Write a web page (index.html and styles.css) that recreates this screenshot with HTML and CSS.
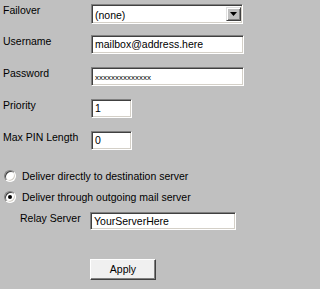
FILE: index.html
```html
<!DOCTYPE html>
<html>
<head>
<meta charset="utf-8">
<link rel="stylesheet" href="styles.css">
</head>
<body>
<div class="panel">
  <div class="row first">
    <span class="lbl">Failover</span>
    <div class="select">
      <span class="val">(none)</span>
      <span class="drop"><svg width="7" height="4" viewBox="0 0 7 4"><path d="M0 0H7L3.5 4Z" fill="#000"/></svg></span>
    </div>
  </div>
  <div class="row">
    <span class="lbl">Username</span>
    <div class="field wide">mailbox@address.here</div>
  </div>
  <div class="row">
    <span class="lbl">Password</span>
    <div class="field wide pw">xxxxxxxxxxxxxx</div>
  </div>
  <div class="row">
    <span class="lbl">Priority</span>
    <div class="field short">1</div>
  </div>
  <div class="row">
    <span class="lbl">Max PIN Length</span>
    <div class="field short">0</div>
  </div>
  <div class="radios">
    <div class="opt"><span class="radio"></span><span>Deliver directly to destination server</span></div>
    <div class="opt"><span class="radio on"></span><span>Deliver through outgoing mail server</span></div>
  </div>
  <div class="relay">
    <span class="lbl relay-lbl">Relay Server</span>
    <div class="field relay-field">YourServerHere</div>
  </div>
  <div class="actions">
    <div class="btn">Apply</div>
  </div>
</div>
</body>
</html>
```
FILE: styles.css
```css
html, body {
  margin: 0;
  padding: 0;
  background: #c0c0c0;
}
body {
  font-family: "Liberation Sans", Arial, sans-serif;
  font-size: 10.5px;
  color: #000;
}
.panel {
  width: 250px;
  height: 289px;
  box-sizing: border-box;
  padding: 4px 0 0 3px;
}
.row {
  display: flex;
  align-items: flex-start;
  height: 32px;
}
.row.first {
  height: 31px;
}
.lbl {
  width: 88px;
  flex: none;
  line-height: 13px;
  padding-top: 0;
}
.field, .select {
  box-sizing: border-box;
  background: #fff;
  border: 1px solid;
  border-color: #808080 #ffffff #ffffff #808080;
  box-shadow: inset 1px 1px 0 #404040, inset -1px -1px 0 #d4d0c8;
  height: 19px;
  padding: 0 0 0 3px;
  line-height: 17px;
  white-space: nowrap;
  overflow: hidden;
}
.select {
  width: 152px;
  height: 20px;
  display: flex;
  align-items: stretch;
  padding: 2px 1px 2px 3px;
  line-height: 16px;
}
.select .val {
  flex: 1;
}
.drop {
  width: 15px;
  flex: none;
  box-sizing: border-box;
  background: #c0c0c0;
  border: 1px solid;
  border-color: #dfdfdf #404040 #404040 #dfdfdf;
  box-shadow: inset 1px 1px 0 #fff, inset -1px -1px 0 #808080;
  display: flex;
  align-items: center;
  justify-content: center;
}
.wide {
  width: 153px;
}
.short {
  width: 41px;
}
.pw {
  font-size: 8px;
  line-height: 19px;
}
.radios {
  margin-top: 2px;
}
.opt {
  height: 21px;
  display: flex;
  align-items: center;
  padding-left: 1px;
}
.radio {
  width: 12px;
  height: 12px;
  box-sizing: border-box;
  border-radius: 50%;
  background: #fff;
  border: 1px solid;
  border-color: #808080 #ffffff #ffffff #808080;
  box-shadow: inset 1px 1px 0 #404040, inset -1px -1px 0 #d4d0c8;
  margin-right: 6px;
  display: flex;
  align-items: center;
  justify-content: center;
}
.radio.on::after {
  content: "";
  width: 4px;
  height: 4px;
  border-radius: 50%;
  background: #000;
}
.relay {
  display: flex;
  align-items: flex-start;
  margin-top: 5px;
  padding-left: 17px;
}
.relay-lbl {
  width: 70px;
}
.relay-field {
  width: 146px;
  height: 18px;
  line-height: 16px;
}
.actions {
  margin-top: 29px;
  padding-left: 87px;
}
.btn {
  width: 66px;
  height: 21px;
  box-sizing: border-box;
  background: #f0f0f0;
  border: 1px solid;
  border-color: #ffffff #404040 #404040 #ffffff;
  box-shadow: inset -1px -1px 0 #808080;
  text-align: center;
  line-height: 19px;
}
```
